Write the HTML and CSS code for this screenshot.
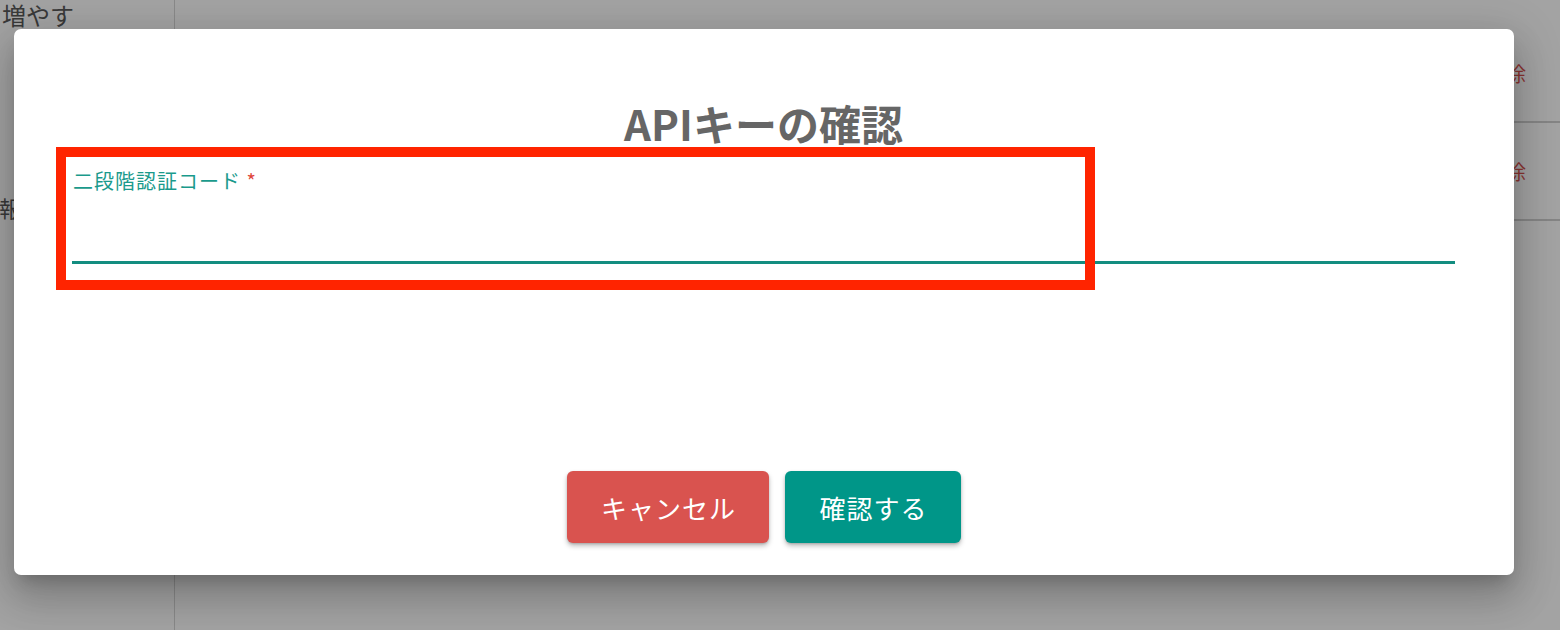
FILE: index.html
```html
<!DOCTYPE html>
<html lang="ja">
<head>
<meta charset="utf-8">
<title>APIキーの確認</title>
<link rel="stylesheet" href="styles.css">
</head>
<body>
<div class="page">
  <aside class="sidebar">
    <div class="side-item">増やす</div>
    <div class="side-item side-item-2">報告</div>
  </aside>
  <main class="main">
    <div class="row"><span class="del">削除</span></div>
    <div class="row"><span class="del">削除</span></div>
  </main>
</div>
<div class="overlay">
  <div class="dialog">
    <h2 class="title">APIキーの確認</h2>
    <div class="field">
      <label class="label">二段階認証コード <span class="req">*</span></label>
      <div class="input"></div>
    </div>
    <div class="actions">
      <button class="btn btn-cancel">キャンセル</button>
      <button class="btn btn-ok">確認する</button>
    </div>
  </div>
</div>
<div class="annotation"></div>
</body>
</html>
```

FILE: styles.css
```css
* { box-sizing: border-box; }
html, body { margin: 0; padding: 0; }
body {
  width: 1560px;
  height: 630px;
  overflow: hidden;
  background: #ffffff;
  font-family: "Noto Sans CJK JP", "Noto Sans", sans-serif;
  position: relative;
}
.page {
  display: flex;
  height: 630px;
}
.sidebar {
  width: 175px;
  border-right: 1px solid #d6d6d6;
  padding-left: 2px;
  flex: none;
}
.side-item {
  font-size: 24px;
  line-height: 30px;
  color: #5a5a5a;
}
.side-item-2 {
  margin-top: 162px;
  margin-left: -3px;
  font-size: 22px;
}
.main {
  flex: 1;
  padding-top: 25px;
}
.row {
  height: 98px;
  border-bottom: 2px solid #d0d0d0;
  display: flex;
  align-items: center;
  justify-content: flex-end;
  padding-right: 34px;
}
.del {
  font-size: 20px;
  color: #d9534f;
}
.overlay {
  position: absolute;
  inset: 0;
  background: rgba(0, 0, 0, 0.36);
  padding: 29px 46px 0 14px;
}
.dialog {
  width: 1500px;
  height: 546px;
  background: #ffffff;
  border-radius: 7px;
  box-shadow: 0 11px 15px -7px rgba(0,0,0,.2), 0 24px 38px 3px rgba(0,0,0,.14), 0 9px 46px 8px rgba(0,0,0,.12);
  display: flex;
  flex-direction: column;
  padding: 69px 59px 32px 58px;
}
.title {
  margin: 0;
  text-align: center;
  font-size: 42px;
  line-height: 49px;
  font-weight: 700;
  color: #666666;
}
.field {
  margin-top: 19px;
  display: flex;
  flex-direction: column;
}
.label {
  font-size: 20px;
  letter-spacing: 1px;
  line-height: 30px;
  color: #1a9a8c;
  padding-left: 1px;
}
.req { color: #e0463c; }
.input {
  height: 68px;
  border-bottom: 3px solid #138d80;
}
.actions {
  margin-top: auto;
  display: flex;
  justify-content: center;
  gap: 16px;
  padding-left: 1px;
}
.btn {
  height: 72px;
  border: none;
  border-radius: 6px;
  font-family: "Noto Sans CJK JP", "Noto Sans", sans-serif;
  font-size: 26px;
  letter-spacing: 1px;
  color: #ffffff;
  padding: 0 0 0 1px;
  box-shadow: 0 3px 5px rgba(0,0,0,.25), 0 1px 2px rgba(0,0,0,.15);
}
.btn-cancel { background: #d9534f; width: 202px; }
.btn-ok { background: #009688; width: 176px; }
.annotation {
  position: absolute;
  left: 56px;
  top: 147px;
  width: 1039px;
  height: 143px;
  border: 10px solid #ff2400;
}
```
